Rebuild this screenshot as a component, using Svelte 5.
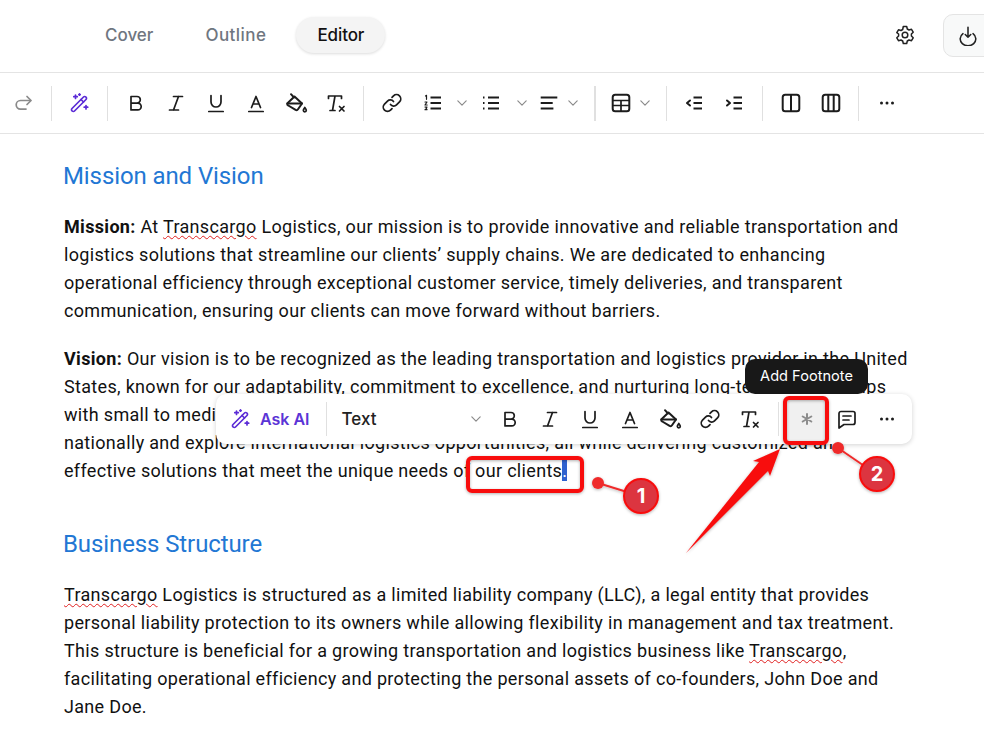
<script>
  const ICONS = {
    redo: '<path d="M19.5 9.5h-10a4.3 4.3 0 0 0 0 8.600H15"/><path d="M16 5.500l4 4-4 4"/>',
    wand: '<path d="M5 17.500 16.500 6a1.600 1.600 0 0 1 2.300 0l.2.200a1.600 1.600 0 0 1 0 2.300L7.500 20a1.600 1.600 0 0 1-2.300 0l-.2-.2a1.600 1.600 0 0 1 0-2.300z"/><path d="M14 8.500l2.500 2.500"/><path d="M8.500 4v3.500M6.800 5.700h3.500M19 14.500v3.500M17.200 16.200h3.500M12.500 2.800v1.400M11.800 3.500h1.400"/>',
    bold: '<path d="M7 5.500h6a3.300 3.300 0 0 1 0 6.600H7zM7 12.100h6.800a3.400 3.400 0 0 1 0 6.800H7z"/>',
    italic: '<path d="M9.500 5.500h9M5.500 19h9M14.500 5.500 9.500 19"/>',
    underline: '<path d="M7 4.500v6.500a5 5 0 0 0 10 0V4.500M4.800 20.500h14.400"/>',
    color: '<path d="M7.500 16.500 12 5.500l4.500 11M9 13h6M4.800 20.500h14.400"/>',
    fill: '<path d="M7 3.200l3 3.300M3.200 12.500 10.500 5.500l7.500 7-4 5.800a1.800 1.800 0 0 1-2.400.600l-7.300-4.400a1.800 1.800 0 0 1-1.100-2z" stroke-width="2"/><path d="M3.500 12.500H18" stroke-width="2"/><path d="M20.800 16.500c-1 1.300-1.500 2-1.500 2.800a1.500 1.500 0 0 0 3 0c0-.8-.5-1.500-1.500-2.800z"/>',
    clear: '<path d="M4.500 7.500V5h13v2.500M11 5 8.500 19.500M6 19.500h5M15.500 15.500l4.500 4.500M20 15.500 15.500 20"/>',
    link: '<path d="M10.500 13.500a4 4 0 0 0 6 .4l3-3a4.200 4.200 0 0 0-6-6l-1.500 1.500"/><path d="M13.500 10.500a4 4 0 0 0-6-.4l-3 3a4.200 4.200 0 0 0 6 6l1.500-1.500"/>',
    ol: '<path d="M9.500 6.500H20M9.500 12H20M9.500 17.500H20" stroke-width="2" stroke-linecap="butt"/><path d="M4.500 5l1-.7v4M4 11h2l-2 3h2.200M4 16h2l-1 1.200 1 1.500H4" stroke-width="1.200"/>',
    ul: '<path d="M9 6.500h11M9 12h11M9 17.500h11" stroke-width="2" stroke-linecap="butt"/><path d="M4 6.500h1.500M4 12h1.500M4 17.500h1.500" stroke-width="2" stroke-linecap="butt"/>',
    align: '<path d="M3.700 6.500h16.600M3.700 12h12M3.700 17.500h12.700" stroke-width="2" stroke-linecap="butt"/>',
    table: '<rect x="3.700" y="3.700" width="16.600" height="16.600" rx="2.500" stroke-width="2"/><path d="M4 9.500h16M4 14.500h16M12 9.500V20"/>',
    outdent: '<path d="M11.500 6.500H20M11.500 12H20M11.500 17.500H20" stroke-width="2" stroke-linecap="butt"/><path d="M8 9.500 5 12l3 2.500" stroke-width="2"/>',
    indent: '<path d="M11.500 6.500H20M11.500 12H20M11.500 17.500H20" stroke-width="2" stroke-linecap="butt"/><path d="M5 9.500 8 12l-3 2.500" stroke-width="2"/>',
    col2: '<rect x="3.700" y="3.700" width="16.600" height="16.600" rx="2.500" stroke-width="2"/><path d="M12 4v16" stroke-width="2"/>',
    col3: '<rect x="3.700" y="3.700" width="16.600" height="16.600" rx="2.500" stroke-width="2"/><path d="M9.300 4v16M14.700 4v16" stroke-width="2"/>',
    more: '<circle cx="6.500" cy="12" r="1.500" fill="currentColor" stroke="none"/><circle cx="12" cy="12" r="1.500" fill="currentColor" stroke="none"/><circle cx="17.500" cy="12" r="1.500" fill="currentColor" stroke="none"/>',
    chevron: '<path d="M7 9.500l5 5 5-5"/>',
    gear: '<path d="M10.300 3.500h3.400l.6 2.500 1.700 1 2.500-.7 1.700 2.900-1.800 1.800v2l1.800 1.800-1.700 2.900-2.500-.7-1.700 1-.6 2.500h-3.400l-.6-2.500-1.700-1-2.500.7-1.700-2.900 1.800-1.800v-2L3.800 9.700l1.700-2.900 2.500.7 1.700-1z" stroke-width="1.500"/><circle cx="12" cy="12" r="2.800" stroke-width="1.500"/>',
    download: '<path d="M6.500 10.500a8.500 7.500 0 1 0 11 0"/><path d="M12 3.500v11M9 11.500l3 3 3-3"/>',
    asterisk: '<path d="M12 7v10M7.700 9.500l8.600 5M16.300 9.500l-8.600 5" stroke-width="2"/>',
    comment: '<path d="M6 4.500h12a2 2 0 0 1 2 2v9a2 2 0 0 1-2 2H9l-5 3.500v-14.500a2 2 0 0 1 2-2z"/><path d="M8 9h8M8 13h6"/>',
  }

  const TOOLBAR = [
    { icon: 'redo', w: 40, cls: 'muted' }, { sep: 17 },
    { icon: 'wand', w: 38, cls: 'purple' }, { sep: 18 },
    { icon: 'bold', w: 40 }, { icon: 'italic', w: 40 }, { icon: 'underline', w: 40 },
    { icon: 'color', w: 40 }, { icon: 'fill', w: 40 }, { icon: 'clear', w: 40 }, { sep: 15 },
    { icon: 'link', w: 41 }, { icon: 'ol', w: 41 }, { icon: 'chevron', w: 18, cls: 'chev' },
    { icon: 'ul', w: 40 }, { icon: 'chevron', w: 21, cls: 'chev' },
    { icon: 'align', w: 34 }, { icon: 'chevron', w: 13, cls: 'chev' }, { sep: 32, thick: true },
    { icon: 'table', w: 20 }, { icon: 'chevron', w: 27, cls: 'chev' }, { sep: 17 },
    { icon: 'outdent', w: 38 }, { icon: 'indent', w: 42 }, { sep: 15 },
    { icon: 'col2', w: 42 }, { icon: 'col3', w: 38 }, { sep: 17 },
    { icon: 'more', w: 40 },
  ]
  const FLOATING = ['bold', 'italic', 'underline', 'color', 'fill', 'link', 'clear']
</script>

{#snippet icon(name)}
  <svg viewBox="0 0 24 24" width="24" height="24" fill="none" stroke="currentColor" stroke-width="1.7" stroke-linecap="round" stroke-linejoin="round">{@html ICONS[name]}</svg>
{/snippet}

<div class="page">
  <header class="topbar">
    <nav class="tabs">
      <span class="tab">Cover</span>
      <span class="tab wide">Outline</span>
      <span class="tab active">Editor</span>
    </nav>
    <div class="actions">
      <span class="gear">{@render icon('gear')}</span>
      <span class="export">{@render icon('download')}</span>
    </div>
  </header>

  <div class="toolbar">
    {#each TOOLBAR as item}
      {#if item.sep}
        <span class="sep-slot" style="width:{item.sep}px"><i class="sep" class:thick={item.thick}></i></span>
      {:else}
        <span class="tool {item.cls ?? ''}" style="width:{item.w}px">{@render icon(item.icon)}</span>
      {/if}
    {/each}
  </div>

  <main class="doc">
    <h2>Mission and Vision</h2>
    <p><strong>Mission:</strong> At <span class="typo">Transcargo</span> Logistics, our mission is to provide innovative and reliable transportation and logistics solutions that streamline our clients’ supply chains. We are dedicated to enhancing operational efficiency through exceptional customer service, timely deliveries, and transparent communication, ensuring our clients can move forward without barriers.</p>
    <p><strong>Vision:</strong> Our vision is to be recognized as the leading transportation and logistics provider in the United States, known for our adaptability, commitment to excellence, and nurturing long-term relationships with small to medium-sized businesses. We aspire to further expand our reach and our services nationally and explore international logistics opportunities, all while delivering customized and effective solutions that meet the unique needs of our clients<span class="selected">.</span></p>
    <h2 class="second">Business Structure</h2>
    <p><span class="typo">Transcargo</span> Logistics is structured as a limited liability company (LLC), a legal entity that provides personal liability protection to its owners while allowing flexibility in management and tax treatment. This structure is beneficial for a growing transportation and logistics business like <span class="typo">Transcargo</span>, facilitating operational efficiency and protecting the personal assets of co-founders, John Doe and Jane Doe.</p>
  </main>

  <div class="tooltip">Add Footnote</div>

  <div class="bubble">
    <span class="tool purple">{@render icon('wand')}</span>
    <span class="ask">Ask AI</span>
    <i class="sep bubble-sep"></i>
    <span class="block-select">Text <span class="tool chev">{@render icon('chevron')}</span></span>
    {#each FLOATING as name}
      <span class="tool fl">{@render icon(name)}</span>
    {/each}
    <i class="sep bubble-sep after"></i>
    <span class="tool fl foot">{@render icon('asterisk')}</span>
    <span class="tool fl">{@render icon('comment')}</span>
    <span class="tool fl">{@render icon('more')}</span>
  </div>

  <svg class="marks" viewBox="0 0 984 732" width="984" height="732">
    <defs>
      <filter id="soft" x="-20%" y="-20%" width="140%" height="140%">
        <feDropShadow dx="0" dy="1" stdDeviation="1.5" flood-color="#000" flood-opacity=".3"/>
      </filter>
    </defs>
    <g filter="url(#soft)">
      <rect x="468" y="458" width="114" height="33" rx="4" fill="none" stroke="#f80d0d" stroke-width="4"/>
      <rect x="785" y="398" width="42" height="45" rx="4" fill="none" stroke="#f80d0d" stroke-width="4"/>
      <polygon points="780,449 770,476 768,471 686,553 759,462 753,461" fill="#f80d0d"/>
      <line x1="598" y1="483" x2="640" y2="496" stroke="#ef2b2b" stroke-width="2"/>
      <circle cx="598" cy="483" r="6" fill="#ef2b2b"/>
      <circle cx="641" cy="496" r="17" fill="#dc3540" stroke="#f80d0d" stroke-width="2"/>
      <line x1="838" y1="448" x2="876" y2="474" stroke="#ef2b2b" stroke-width="2"/>
      <circle cx="838" cy="448" r="6" fill="#ef2b2b"/>
      <circle cx="877" cy="474" r="17" fill="#dc3540" stroke="#f80d0d" stroke-width="2"/>
    </g>
    <text x="641" y="503" class="num">1</text>
    <text x="877" y="481" class="num">2</text>
  </svg>
</div>

<style>
  :global(body) { margin: 0; background: #fff; }
  .page { position: relative; width: 984px; height: 732px; overflow: hidden; background: #fff; color: #111; font-family: Roboto, "Liberation Sans", sans-serif; }

  .topbar { height: 70px; padding-bottom: 2px; display: flex; align-items: center; justify-content: space-between; border-bottom: 1px solid #e4e4e4; }
  .tabs { display: flex; gap: 8px; margin-left: 83px; }
  .tab { height: 36px; padding: 0 22px; border-radius: 18px; font: 500 17px/36px Inter, sans-serif; color: #6f7680; }
  .tab.wide { letter-spacing: .45px; padding-right: 20px; }
  .tab.active { margin-left: 2px; padding: 0 21px 0 21px; letter-spacing: -.1px; color: #111; background: #f4f4f4; box-shadow: 0 1px 3px rgba(0,0,0,.14); }
  .actions { display: flex; align-items: center; gap: 26px; margin-right: -29px; }
  .gear { display: flex; color: #222; }
  .export :global(svg) { width: 22px; height: 22px; }
  .export { width: 70px; height: 43px; box-sizing: border-box; padding-left: 13px; display: flex; align-items: center; background: #f8f9f9; border: 1px solid #e4e4e4; border-radius: 10px; color: #222; }

  .toolbar { height: 60px; display: flex; align-items: center; padding-left: 3px; border-bottom: 1px solid #e4e4e4; }
  .tool { display: flex; align-items: center; justify-content: center; flex: none; color: #1c1c1c; }
  .tool :global(svg) { flex: none; }
  .tool.muted { color: #8a8a8a; }
  .tool.purple { color: #5b2bd6; }
  .tool.chev { color: #8a8a8a; }
  .tool.chev :global(svg) { width: 20px; height: 20px; stroke-width: 1.4; }
  .sep-slot { display: flex; justify-content: center; flex: none; }
  .sep { display: block; width: 1px; height: 35px; background: #e0e0e0; flex: none; }
  .sep.thick { width: 2px; }

  .doc { padding: 0 64px; width: 852px; }
  h2 { margin: 26px 0 0 -1px; font-size: 24px; font-weight: 400; line-height: 32px; letter-spacing: -.1px; color: #2277d4; }
  h2.second { margin-top: 43px; }
  p { margin: 20px 0 0; font-size: 18px; line-height: 28px; letter-spacing: .32px; }
  h2 + p { margin-top: 21px; }
  strong { font-weight: 700; }
  .typo { text-decoration: underline wavy #e02020; text-decoration-thickness: 1.3px; text-underline-offset: 2px; }
  .selected { background: #2f62cf; color: #fff; }

  .tooltip { position: absolute; left: 745px; top: 359px; width: 123px; height: 35px; border-radius: 10px; background: #181818; color: #fff; font: 400 14.6px/35px Inter, sans-serif; text-align: center; }
  .bubble { position: absolute; left: 216px; top: 394px; width: 696px; height: 50px; box-sizing: border-box; display: flex; align-items: center; padding-left: 12px; background: #fff; border-radius: 10px; box-shadow: 0 1px 5px rgba(0,0,0,.18); }
  .ask { margin-left: 8px; font: 600 16px Inter, sans-serif; color: #5b34d6; }
  .bubble-sep { height: 34px; margin: 0 15px 0 16px; }
  .bubble-sep.after { margin: 0 8px; }
  .block-select { width: 148px; box-sizing: border-box; padding-right: 4px; flex: none; display: flex; align-items: center; justify-content: space-between; font: 500 17px Inter, sans-serif; color: #222; }
  .tool.fl { width: 40px; }
  .foot { color: #8c8c8c; background: #f0f0f0; height: 44px; }

  .marks { position: absolute; left: 0; top: 0; pointer-events: none; }
  .num { font: 700 20px Inter, sans-serif; fill: #fff; text-anchor: middle; }
</style>
